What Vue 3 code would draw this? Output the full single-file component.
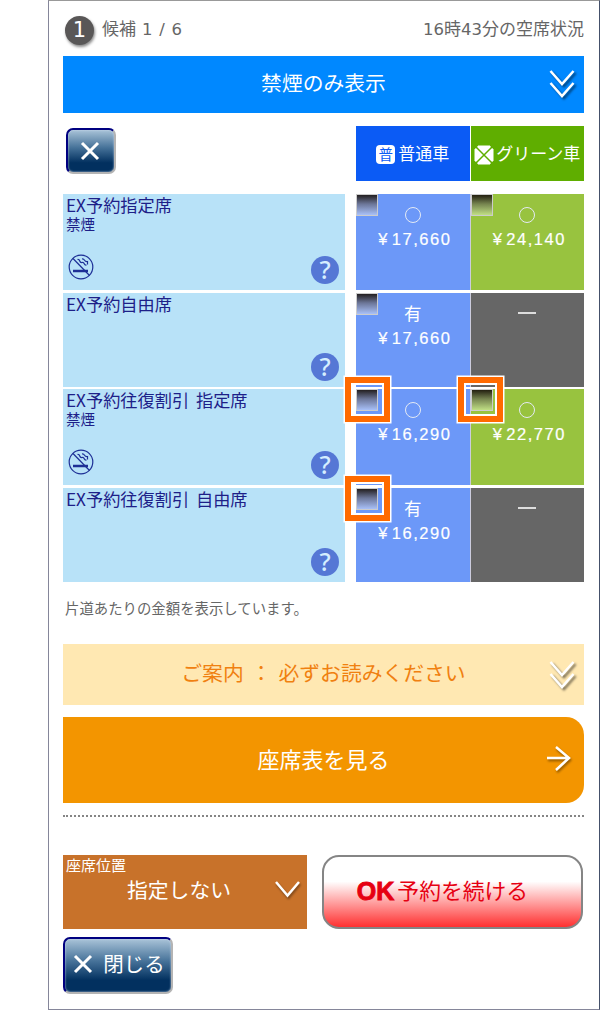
<template>
  <div class="screen">
    <header class="top">
      <span class="step">1</span>
      <span class="candidate">候補<span class="num page">1 / 6</span></span>
      <span class="status"><span class="num">16</span>時<span class="num">43</span>分の空席状況</span>
    </header>

    <button class="filter">
      禁煙のみ表示
      <svg class="down" width="30" height="34" viewBox="0 0 30 34">
        <path d="M2.500 3 L14 16 L25.500 3 M2.500 15 L14 28 L25.500 15" />
      </svg>
    </button>

    <div class="table-head">
      <button class="glass clear">
        <svg width="20" height="20" viewBox="0 0 20 20"><path d="M2 2 L18 18 M18 2 L2 18" /></svg>
      </button>
      <div class="classes">
        <div class="class-name ordinary"><span class="badge">普</span>普通車</div>
        <div class="class-name green">
          <svg width="20" height="20" viewBox="0 0 20 20">
            <path d="M4 1 H16 L16.500 3.500 L19 4 V16 L16.500 16.500 L16 19 H4 L3.500 16.500 L1 16 V4 L3.500 3.500 Z" fill="#fff" stroke="#fff" stroke-width="1" stroke-linejoin="round" />
            <path d="M2 2 L18 18 M18 2 L2 18" stroke="#5fae00" stroke-width="1.500" />
          </svg>
          グリーン車
        </div>
      </div>
    </div>

    <div class="rows">
      <div v-for="row in rows" :key="row.name" class="row" :class="{ short: !row.smoke }">
        <div class="plan">
          <div class="plan-name">{{ row.name }}</div>
          <div v-if="row.smoke" class="smoke">禁煙</div>
          <svg v-if="row.smoke" class="nosmoke" width="26" height="26" viewBox="0 0 26 26">
            <circle cx="13" cy="13" r="11.800" />
            <path d="M5 4.500 L21.500 21.500" />
            <path class="thick" d="M5 17 H20" />
            <path d="M9.500 5.500 C13 5 10.500 9 14 8.500 C17.500 8 15 11.500 18.500 11 M14 5 C17.500 4.500 15.500 8 19.500 7.500 V10.500" />
          </svg>
          <span class="help">?</span>
        </div>
        <div class="cells">
          <div v-for="(cell, i) in row.cells" :key="i" class="cell" :class="cell.type">
            <template v-if="cell.price">
              <span class="check"></span>
              <span v-if="row.marked" class="mark"></span>
              <span v-if="cell.state === '○'" class="circle"></span>
              <span v-else class="state">{{ cell.state }}</span>
              <span class="price"><span class="yen">¥</span>{{ cell.price }}</span>
            </template>
            <span v-else class="dash"></span>
          </div>
        </div>
      </div>
    </div>

    <p class="note">片道あたりの金額を表示しています。</p>

    <button class="guide">
      <span>ご案内</span><span class="colon">：</span><span>必ずお読みください</span>
      <svg class="down" width="30" height="34" viewBox="0 0 30 34">
        <path d="M2.500 3 L14 16 L25.500 3 M2.500 15 L14 28 L25.500 15" />
      </svg>
    </button>

    <button class="seatmap">
      座席表を見る
      <svg class="arrow" width="28" height="30" viewBox="0 0 28 30">
        <path d="M2 14 H24 M11 3 L24 14 L11 26" />
      </svg>
    </button>

    <div class="dots"></div>

    <div class="actions">
      <div class="position">
        <span class="caption">座席位置</span>
        <span class="value">指定しない</span>
        <svg class="chevron" width="28" height="20" viewBox="0 0 28 20"><path d="M2 2 L13.500 15.500 L25 2" /></svg>
      </div>
      <button class="ok"><b>OK</b>予約を続ける</button>
    </div>

    <button class="glass close">
      <svg width="20" height="20" viewBox="0 0 20 20"><path d="M2 2 L18 18 M18 2 L2 18" /></svg>
      <span>閉じる</span>
    </button>
  </div>
</template>

<script setup>
import { ref } from "vue";

const rows = ref([
  {
    name: "EX予約指定席",
    smoke: true,
    cells: [
      { type: "blue", state: "○", price: "17,660" },
      { type: "lime", state: "○", price: "24,140" },
    ],
  },
  {
    name: "EX予約自由席",
    cells: [{ type: "blue", state: "有", price: "17,660" }, { type: "none" }],
  },
  {
    name: "EX予約往復割引 指定席",
    smoke: true,
    marked: true,
    cells: [
      { type: "blue", state: "○", price: "16,290" },
      { type: "lime", state: "○", price: "22,770" },
    ],
  },
  {
    name: "EX予約往復割引 自由席",
    marked: true,
    cells: [{ type: "blue", state: "有", price: "16,290" }, { type: "none" }],
  },
]);
</script>

<style>
body {
  background: #fff;
}
</style>

<style scoped>
.screen {
  box-sizing: border-box;
  width: 552px;
  height: 1010px;
  margin-left: 48px;
  padding: 0 15px 0 14px;
  border: 1px solid #85869a;
  border-top-color: #999;
  border-right-color: #44506a;
  background: #fff;
  color: #666;
  font-family: "Noto Sans CJK JP", sans-serif;
  font-size: 17px;
  line-height: 1;
}

button {
  display: flex;
  align-items: center;
  justify-content: center;
  box-sizing: border-box;
  padding: 0;
  border: 0;
  font: inherit;
}

svg {
  flex: none;
  fill: none;
  stroke: #fff;
  stroke-width: 2.5;
}

.num {
  font-family: "DejaVu Sans", sans-serif;
  font-size: 16.500px;
}

.page {
  margin-left: 6px;
  word-spacing: 1.500px;
}

.top {
  display: flex;
  align-items: center;
  height: 55px;
}

.step {
  width: 29px;
  height: 29px;
  margin: 4px 8px 0 2px;
  border-radius: 50%;
  background: #595757;
  box-shadow: 1px 2px 3px #888;
  color: #fff;
  font: 21px/28px "DejaVu Sans", sans-serif;
  text-align: center;
}

.status {
  margin-left: auto;
}

.filter {
  position: relative;
  width: 100%;
  height: 57px;
  padding-bottom: 4px;
  background: #0088ff;
  color: #fff;
  font-size: 20.800px;
}

.down {
  position: absolute;
  right: 6px;
  top: 12px;
  filter: drop-shadow(2px 2px 1px rgba(0, 0, 0, 0.5));
}

.table-head {
  display: flex;
  justify-content: space-between;
  height: 55px;
  margin: 13px 0 13px;
}

.glass {
  border: 2px solid;
  border-color: #000080 #b4b4b4 #b4b4b4 #000080;
  border-radius: 7px;
  background: linear-gradient(#a9c3d8, #467299 42%, #02305f 78%, #02305f);
  box-shadow: inset 0 0 2px #cde;
  color: #fff;
}

.glass svg {
  stroke-width: 3;
}

.clear {
  width: 50px;
  height: 46px;
  margin: 2px 0 0 3px;
  padding-right: 2px;
}

.classes,
.cells {
  display: flex;
  gap: 1px;
  width: 228px;
}

.class-name {
  display: flex;
  flex: 1;
  align-items: center;
  justify-content: center;
  box-sizing: border-box;
  gap: 3px;
  padding-bottom: 2px;
  color: #fff;
  white-space: nowrap;
}

.ordinary {
  background: #0b5bf5;
}

.green {
  gap: 2px;
  background: #5fae00;
}

.badge,
.green svg {
  margin-top: 4px;
}

.badge {
  width: 19px;
  height: 19px;
  border-radius: 4px;
  background: #fff;
  color: #0b5bf5;
  font-size: 14.500px;
  line-height: 17px;
  text-align: center;
}

.rows {
  display: flex;
  flex-direction: column;
  gap: 2.500px;
}

.row {
  display: flex;
  justify-content: space-between;
  height: 96px;
}

.row.short {
  height: 94px;
}

.plan {
  position: relative;
  box-sizing: border-box;
  width: 282px;
  padding: 2px 3px;
  background: #b8e2f8;
  color: #1d2088;
}

.plan-name {
  font-size: 17.200px;
  line-height: 18px;
  white-space: nowrap;
  word-spacing: 3px;
}

.smoke {
  margin-top: 3px;
  font-size: 14.500px;
}

.nosmoke {
  position: absolute;
  left: 5px;
  bottom: 10px;
  stroke: #1d2f96;
  stroke-width: 1.200;
}

.nosmoke .thick {
  stroke-width: 2.500;
}

.help {
  position: absolute;
  right: 6px;
  bottom: 6px;
  width: 28px;
  height: 28px;
  border-radius: 50%;
  background: #5577d5;
  color: #d5eeff;
  font: 500 25px/27px "Noto Sans", sans-serif;
  text-align: center;
}

.cells {
  background: #ccd;
}

.cell {
  position: relative;
  display: flex;
  flex: 1;
  flex-direction: column;
  align-items: center;
  color: #fff;
}

.blue {
  background: #6c98f8;
}

.lime {
  background: #98c33f;
}

.none {
  background: #666;
}

.check {
  position: absolute;
  left: 0;
  top: 0;
  box-sizing: border-box;
  width: 22px;
  height: 22px;
  border: 1px solid #ccc;
  background: linear-gradient(#231f20, #6c7698 45%, #a8c0f8);
}

.lime .check {
  background: linear-gradient(#231f10, #76844f 45%, #c0df84);
}

/* orange callout around the checkbox */
.mark {
  position: absolute;
  z-index: 1;
  left: -11px;
  top: -12px;
  box-sizing: border-box;
  width: 45px;
  height: 45px;
  border: 6px solid #ff6a00;
  box-shadow: 0 0 0 1.500px #fff, inset 0 0 0 2px #fff;
}

.lime .mark {
  left: -13px;
}

.circle {
  box-sizing: border-box;
  width: 16px;
  height: 16px;
  margin: 13px 0 8px;
  border: 1.500px solid #e4eaf4;
  border-radius: 50%;
}

.state {
  margin: 11px 0 9px;
  font-size: 17.500px;
}

.dash {
  width: 18px;
  height: 2px;
  margin-top: 19px;
  background: #ddd;
}

.price {
  padding-left: 4px;
  font: 16.500px/17px "Liberation Sans", sans-serif;
  letter-spacing: 1.500px;
  -webkit-text-stroke: 0.200px #fff;
}

.yen {
  margin-right: 3px;
}

.note {
  margin: 17px 0 0 2px;
  font-size: 14.400px;
  line-height: 18px;
}

.guide {
  position: relative;
  width: 100%;
  height: 61px;
  margin-top: 27.500px;
  padding-bottom: 4px;
  background: #ffe8b2;
  color: #f08010;
  font-size: 20.800px;
}

.colon {
  margin: 0 7px;
}

.guide .down {
  top: 15px;
}

.seatmap {
  position: relative;
  width: 100%;
  height: 86px;
  margin-top: 12px;
  padding-bottom: 5px;
  border-radius: 0 18px 18px 0;
  background: #f39500;
  color: #fff;
  font-size: 22px;
}

.arrow {
  position: absolute;
  right: 11px;
  top: 27px;
  filter: drop-shadow(1px 2px 1px rgba(0, 0, 0, 0.4));
}

.dots {
  margin-top: 12px;
  border-top: 2px dotted #858585;
}

.actions {
  display: flex;
  justify-content: space-between;
  margin-top: 38px;
  padding-right: 1px;
}

.position {
  position: relative;
  display: flex;
  flex-direction: column;
  box-sizing: border-box;
  width: 244px;
  height: 74px;
  padding: 2px 3px;
  background: #c8722a;
  color: #fff;
}

.caption {
  font-size: 15px;
}

.value {
  margin: 7px 0 0 61px;
  font-size: 20.800px;
}

.chevron {
  position: absolute;
  right: 5px;
  top: 25px;
  filter: drop-shadow(1px 2px 1px rgba(0, 0, 0, 0.4));
}

.ok {
  width: 261px;
  height: 74px;
  padding: 0 20px 4px 0;
  border: 2px solid #858585;
  border-radius: 17px;
  background: linear-gradient(#fff 35%, #ff3030);
  color: #e60012;
  font-size: 21.800px;
}

.ok b {
  margin: 3px 3px 0 0;
  font: bold 25px/1 "Liberation Sans", sans-serif;
  -webkit-text-stroke: 0.900px #e60012;
}

.close {
  gap: 10px;
  width: 110px;
  height: 57px;
  margin-top: 8px;
  padding: 0 0 4px 2px;
  font-size: 20.500px;
}
</style>
